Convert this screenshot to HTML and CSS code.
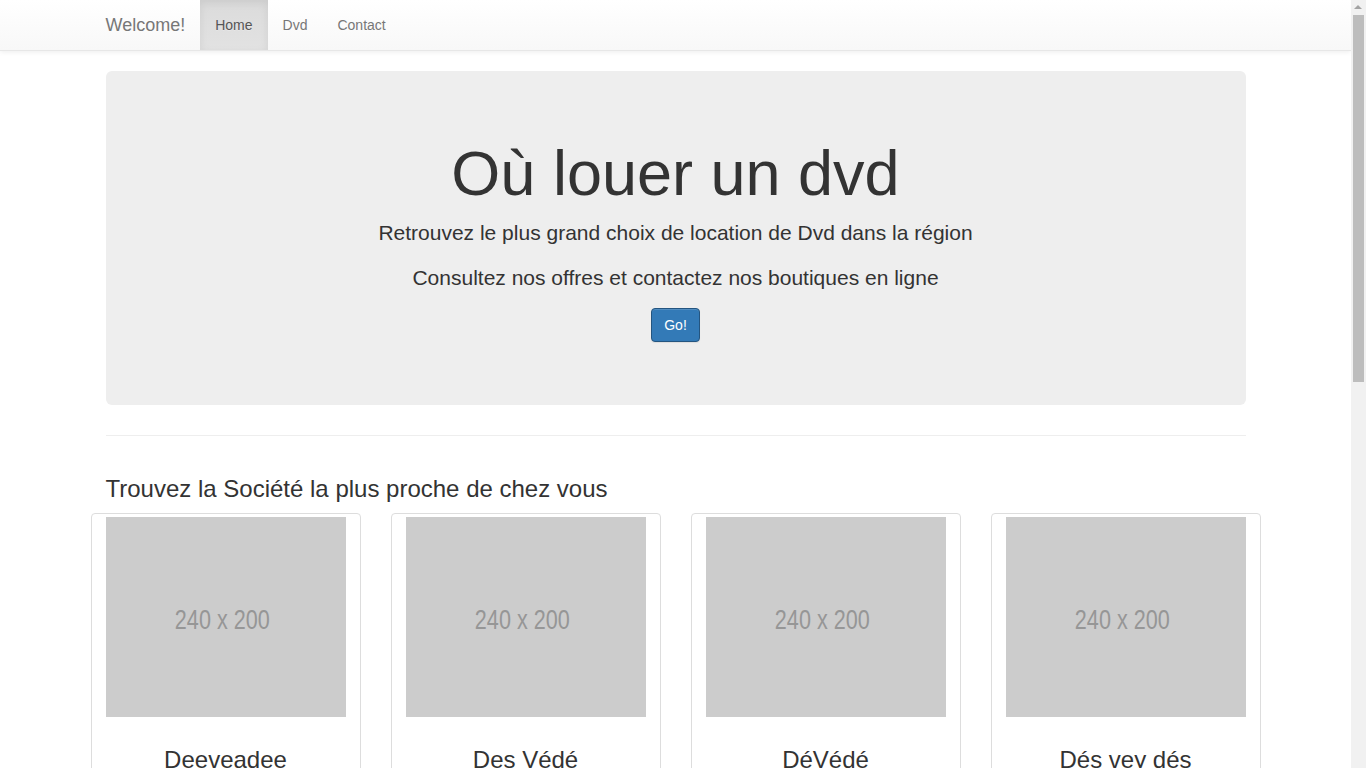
FILE: index.html
```html
<!DOCTYPE html>
<html lang="fr">
<head>
<meta charset="utf-8">
<title>Welcome!</title>
<link rel="stylesheet" href="styles.css">
</head>
<body>
<div class="page">
<nav class="navbar">
  <div class="container nav-inner">
    <a class="brand" href="#">Welcome!</a>
    <ul class="nav">
      <li class="active"><a href="#">Home</a></li>
      <li><a href="#">Dvd</a></li>
      <li><a href="#">Contact</a></li>
    </ul>
  </div>
</nav>
<main class="container">
  <section class="jumbotron">
    <h1>Où louer un dvd</h1>
    <p>Retrouvez le plus grand choix de location de Dvd dans la région</p>
    <p>Consultez nos offres et contactez nos boutiques en ligne</p>
    <div class="cta"><a class="btn btn-primary" href="#">Go!</a></div>
  </section>
  <hr class="sep">
  <section class="societes">
    <h3 class="section-title">Trouvez la Société la plus proche de chez vous</h3>
    <div class="row">
      <div class="thumbnail">
        <div class="holder"><span>240 x 200</span></div>
        <div class="caption">
          <h3>Deeveadee</h3>
          <p>Location de Dvd au centre-ville, large choix de films récents et classiques.</p>
          <p><a class="btn btn-primary" href="#">Voir</a> <a class="btn btn-default" href="#">Contact</a></p>
        </div>
      </div>
      <div class="thumbnail">
        <div class="holder"><span>240 x 200</span></div>
        <div class="caption">
          <h3>Des Védé</h3>
          <p>Location de Dvd au centre-ville, large choix de films récents et classiques.</p>
          <p><a class="btn btn-primary" href="#">Voir</a> <a class="btn btn-default" href="#">Contact</a></p>
        </div>
      </div>
      <div class="thumbnail">
        <div class="holder"><span>240 x 200</span></div>
        <div class="caption">
          <h3>DéVédé</h3>
          <p>Location de Dvd au centre-ville, large choix de films récents et classiques.</p>
          <p><a class="btn btn-primary" href="#">Voir</a> <a class="btn btn-default" href="#">Contact</a></p>
        </div>
      </div>
      <div class="thumbnail">
        <div class="holder"><span>240 x 200</span></div>
        <div class="caption">
          <h3>Dés vey dés</h3>
          <p>Location de Dvd au centre-ville, large choix de films récents et classiques.</p>
          <p><a class="btn btn-primary" href="#">Voir</a> <a class="btn btn-default" href="#">Contact</a></p>
        </div>
      </div>
    </div>
  </section>
  <hr class="sep">
  <footer class="footer">
    <p>&copy; 2015 Où louer un dvd</p>
  </footer>
</main>
</div>
<div class="scrollbar" aria-hidden="true">
  <span class="arrow"></span>
  <span class="thumb"></span>
</div>
</body>
</html>
```

FILE: styles.css
```css
* { box-sizing: border-box; }
html, body { margin: 0; padding: 0; }
body {
  font-family: "Liberation Sans", Arial, Helvetica, sans-serif;
  font-size: 14px;
  line-height: 1.42857143;
  color: #333;
  background: #fff;
}
.page {
  margin-right: 15px;
}
a { text-decoration: none; }
.container {
  width: 1170px;
  margin: 0 auto;
  padding: 0 15px;
}
.navbar {
  height: 51px;
  background-image: linear-gradient(to bottom, #fff 0%, #f8f8f8 100%);
  border-bottom: 1px solid #e7e7e7;
  box-shadow: inset 0 1px 0 rgba(255,255,255,.15), 0 1px 5px rgba(0,0,0,.075);
  margin-bottom: 20px;
}
.nav-inner {
  display: flex;
  height: 50px;
}
.brand {
  margin-left: -15px;
  padding: 15px;
  font-size: 18px;
  line-height: 20px;
  height: 50px;
  color: #777;
  text-shadow: 0 1px 0 rgba(255,255,255,.25);
}
.nav {
  display: flex;
  list-style: none;
  margin: 0;
  padding: 0;
}
.nav a {
  display: block;
  padding: 15px;
  line-height: 20px;
  color: #777;
  text-shadow: 0 1px 0 rgba(255,255,255,.25);
}
.nav .active a {
  color: #555;
  background-image: linear-gradient(to bottom, #dbdbdb 0%, #e2e2e2 100%);
  box-shadow: inset 0 3px 9px rgba(0,0,0,.075);
}
.jumbotron {
  background: #eee;
  border-radius: 6px;
  padding: 48px 60px;
  margin-bottom: 30px;
  text-align: center;
}
.jumbotron h1 {
  font-size: 63px;
  font-weight: 500;
  line-height: 1.1;
  margin: 20px 0 10px;
}
.jumbotron p {
  font-size: 21px;
  font-weight: 200;
  line-height: 30px;
  margin: 0 0 15px;
}
.cta { margin-bottom: 15px; }
.btn {
  display: inline-block;
  padding: 6px 12px;
  font-size: 14px;
  line-height: 20px;
  border: 1px solid transparent;
  border-radius: 4px;
}
.btn-primary {
  color: #fff;
  background-color: #337ab7;
  border-color: #245580;
  box-shadow: inset 0 1px 0 rgba(255,255,255,.15), 0 1px 1px rgba(0,0,0,.075);
}
.btn-default {
  color: #333;
  background-image: linear-gradient(to bottom, #fff 0%, #e0e0e0 100%);
  border-color: #ccc;
}
.sep {
  margin: 0 0 20px;
  border: 0;
  border-top: 1px solid #eee;
}
.societes {
  padding-top: 20px;
}
.section-title {
  font-size: 24px;
  font-weight: 500;
  line-height: 1.1;
  margin: 0 0 10px;
}
.row {
  display: flex;
  gap: 30px;
  margin: 0 -15px;
}
.thumbnail {
  width: 270px;
  padding: 3px 4px 4px;
  border: 1px solid #ddd;
  border-radius: 4px;
  margin-bottom: 20px;
  background: #fff;
}
.holder {
  width: 240px;
  height: 200px;
  margin: 0 auto;
  background: #ccc;
  display: flex;
  align-items: center;
  justify-content: center;
}
.holder span {
  display: inline-block;
  font-family: "Liberation Sans", Arial, sans-serif;
  font-size: 27px;
  line-height: 1;
  color: #969696;
  transform: scaleX(0.8);
  margin-right: 7px;
  margin-top: 8px;
}
.caption {
  padding: 9px;
  text-align: center;
}
.caption h3 {
  font-size: 24px;
  font-weight: 500;
  line-height: 1.1;
  margin: 21px 0 10px;
}
.caption p { margin: 0 0 10px; }
.footer { padding: 10px 0 40px; }
.scrollbar {
  position: fixed;
  top: 0;
  right: 0;
  width: 15px;
  height: 100vh;
  background: #f1f1f1;
}
.scrollbar .arrow {
  position: absolute;
  top: 5px;
  left: 3px;
  width: 0;
  height: 0;
  border-left: 4px solid transparent;
  border-right: 4px solid transparent;
  border-bottom: 4px solid #a3a3a3;
}
.scrollbar .thumb {
  position: absolute;
  top: 15px;
  left: 2px;
  width: 11px;
  height: 367px;
  background: #bdbdbd;
}
```
